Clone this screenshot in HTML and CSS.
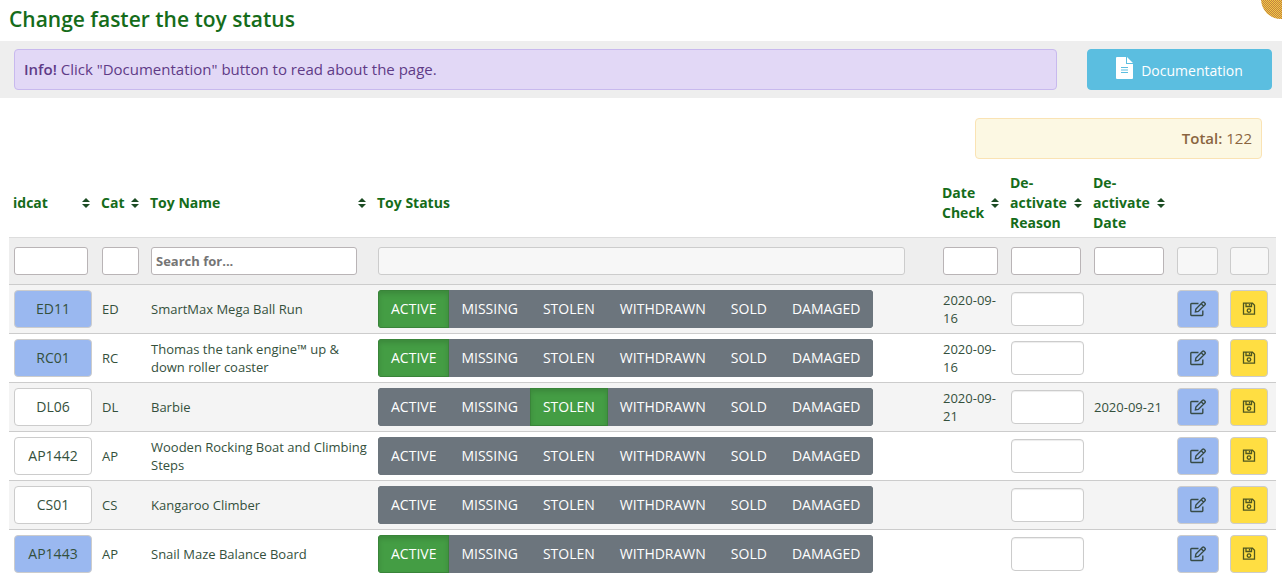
FILE: index.html
```html
<!DOCTYPE html>
<html lang="en">
<head>
<meta charset="utf-8">
<title>Change faster the toy status</title>
<link rel="stylesheet" href="styles.css">
</head>
<body>
<svg class="sprite" aria-hidden="true">
  <symbol id="i-edit" viewBox="0 0 16 16"><path d="M8.5 2.500H1.500a.7.700 0 0 0-.7.700v10.600c0 .4.300.7.700.7h10.600a.7.700 0 0 0 .7-.7V9.500M5.400 10.800l.5-2.800L12.600 1.300a1 1 0 0 1 1.400 0l1 1a1 1 0 0 1 0 1.400L8.300 10.400zM11.200 2.800l2.300 2.300"/></symbol>
  <symbol id="i-save" viewBox="0 0 14 14"><path d="M1.500 1.200h9l2 2v9h-11zM4 1.200v3.300h5.500V1.200M7.500 2v1.500"/><circle cx="7" cy="8.600" r="1.800"/></symbol>
  <symbol id="i-sort" viewBox="0 0 8 10"><path d="M4 0l4 4H0zM4 10l4-4H0z"/></symbol>
</svg>
<header class="top">
  <h1 class="title">Change faster the toy status</h1>
  <span class="bubble"></span>
</header>
<section class="infobar">
  <p class="info"><strong>Info!</strong> Click "Documentation" button to read about the page.</p>
  <button class="doc" type="button"><svg class="doc-icon" viewBox="0 0 17 22" aria-hidden="true"><path d="M1 0h9v7h7v14a1 1 0 0 1-1 1H1a1 1 0 0 1-1-1V1a1 1 0 0 1 1-1zM11 0l6 6h-6z" fill="#fff"/><path d="M5 10.500h7M5 13h7M5 15.500h7" stroke="#5bbee0"/></svg>Documentation</button>
</section>
<main class="content">
  <p class="total"><strong>Total:</strong> 122</p>
  <table class="toys">
    <colgroup><col class="c-id"><col class="c-cat"><col class="c-name"><col><col class="c-check"><col class="c-de"><col class="c-de"><col class="c-edit"><col class="c-save"></colgroup>
    <thead>
      <tr>
        <th scope="col"><div class="head"><span>idcat</span><svg class="sort"><use href="#i-sort"/></svg></div></th>
        <th scope="col"><div class="head"><span>Cat</span><svg class="sort"><use href="#i-sort"/></svg></div></th>
        <th scope="col"><div class="head"><span>Toy Name</span><svg class="sort"><use href="#i-sort"/></svg></div></th>
        <th scope="col">Toy Status</th>
        <th scope="col"><div class="head"><span>Date Check</span><svg class="sort"><use href="#i-sort"/></svg></div></th>
        <th scope="col"><div class="head"><span>De-activate Reason</span><svg class="sort"><use href="#i-sort"/></svg></div></th>
        <th scope="col"><div class="head"><span>De-activate Date</span><svg class="sort"><use href="#i-sort"/></svg></div></th>
        <td></td><td></td>
      </tr>
      <tr class="filters">
        <td><input class="filter" aria-label="Filter idcat"></td>
        <td class="tight"><input class="filter" aria-label="Filter category"></td>
        <td class="name-gap"><input class="filter" aria-label="Filter toy name" placeholder="Search for..."></td>
        <td class="wide-gap"><input class="filter" aria-label="Filter status" disabled></td>
        <td class="mid"><input class="filter" aria-label="Filter date check"></td>
        <td class="mid"><input class="filter" aria-label="Filter reason"></td>
        <td class="mid"><input class="filter" aria-label="Filter de-activate date"></td>
        <td class="tight"><input class="filter" aria-label="Filter edit" disabled></td>
        <td class="tight"><input class="filter" aria-label="Filter save" disabled></td>
      </tr>
    </thead>
    <tbody>
      <tr>
        <td><button class="btn id blue" type="button">ED11</button></td><td>ED</td><td>SmartMax Mega Ball Run</td>
        <td><div class="group"><button class="st on" type="button">ACTIVE</button><button class="st" type="button">MISSING</button><button class="st" type="button">STOLEN</button><button class="st" type="button">WITHDRAWN</button><button class="st" type="button">SOLD</button><button class="st" type="button">DAMAGED</button></div></td>
        <td>2020-09-16</td><td><input class="reason" aria-label="Reason ED11"></td><td></td>
        <td><button class="btn blue edit" type="button" aria-label="Edit"><svg class="ic-edit"><use href="#i-edit"/></svg></button></td>
        <td><button class="btn save" type="button" aria-label="Save"><svg class="ic-save"><use href="#i-save"/></svg></button></td>
      </tr>
      <tr>
        <td><button class="btn id blue" type="button">RC01</button></td><td>RC</td><td>Thomas the tank engine™ up &amp; down roller coaster</td>
        <td><div class="group"><button class="st on" type="button">ACTIVE</button><button class="st" type="button">MISSING</button><button class="st" type="button">STOLEN</button><button class="st" type="button">WITHDRAWN</button><button class="st" type="button">SOLD</button><button class="st" type="button">DAMAGED</button></div></td>
        <td>2020-09-16</td><td><input class="reason" aria-label="Reason RC01"></td><td></td>
        <td><button class="btn blue edit" type="button" aria-label="Edit"><svg class="ic-edit"><use href="#i-edit"/></svg></button></td>
        <td><button class="btn save" type="button" aria-label="Save"><svg class="ic-save"><use href="#i-save"/></svg></button></td>
      </tr>
      <tr>
        <td><button class="btn id" type="button">DL06</button></td><td>DL</td><td>Barbie</td>
        <td><div class="group"><button class="st" type="button">ACTIVE</button><button class="st" type="button">MISSING</button><button class="st on" type="button">STOLEN</button><button class="st" type="button">WITHDRAWN</button><button class="st" type="button">SOLD</button><button class="st" type="button">DAMAGED</button></div></td>
        <td>2020-09-21</td><td><input class="reason" aria-label="Reason DL06"></td><td>2020-09-21</td>
        <td><button class="btn blue edit" type="button" aria-label="Edit"><svg class="ic-edit"><use href="#i-edit"/></svg></button></td>
        <td><button class="btn save" type="button" aria-label="Save"><svg class="ic-save"><use href="#i-save"/></svg></button></td>
      </tr>
      <tr>
        <td><button class="btn id" type="button">AP1442</button></td><td>AP</td><td>Wooden Rocking Boat and Climbing Steps</td>
        <td><div class="group"><button class="st" type="button">ACTIVE</button><button class="st" type="button">MISSING</button><button class="st" type="button">STOLEN</button><button class="st" type="button">WITHDRAWN</button><button class="st" type="button">SOLD</button><button class="st" type="button">DAMAGED</button></div></td>
        <td></td><td><input class="reason" aria-label="Reason AP1442"></td><td></td>
        <td><button class="btn blue edit" type="button" aria-label="Edit"><svg class="ic-edit"><use href="#i-edit"/></svg></button></td>
        <td><button class="btn save" type="button" aria-label="Save"><svg class="ic-save"><use href="#i-save"/></svg></button></td>
      </tr>
      <tr>
        <td><button class="btn id" type="button">CS01</button></td><td>CS</td><td>Kangaroo Climber</td>
        <td><div class="group"><button class="st" type="button">ACTIVE</button><button class="st" type="button">MISSING</button><button class="st" type="button">STOLEN</button><button class="st" type="button">WITHDRAWN</button><button class="st" type="button">SOLD</button><button class="st" type="button">DAMAGED</button></div></td>
        <td></td><td><input class="reason" aria-label="Reason CS01"></td><td></td>
        <td><button class="btn blue edit" type="button" aria-label="Edit"><svg class="ic-edit"><use href="#i-edit"/></svg></button></td>
        <td><button class="btn save" type="button" aria-label="Save"><svg class="ic-save"><use href="#i-save"/></svg></button></td>
      </tr>
      <tr>
        <td><button class="btn id blue" type="button">AP1443</button></td><td>AP</td><td>Snail Maze Balance Board</td>
        <td><div class="group"><button class="st on" type="button">ACTIVE</button><button class="st" type="button">MISSING</button><button class="st" type="button">STOLEN</button><button class="st" type="button">WITHDRAWN</button><button class="st" type="button">SOLD</button><button class="st" type="button">DAMAGED</button></div></td>
        <td></td><td><input class="reason" aria-label="Reason AP1443"></td><td></td>
        <td><button class="btn blue edit" type="button" aria-label="Edit"><svg class="ic-edit"><use href="#i-edit"/></svg></button></td>
        <td><button class="btn save" type="button" aria-label="Save"><svg class="ic-save"><use href="#i-save"/></svg></button></td>
      </tr>
    </tbody>
  </table>
</main>
</body>
</html>
```

FILE: styles.css
```css
* { box-sizing: border-box; }
body { margin: 0; background: #fff; color: #34503c; font-family: "Open Sans", "Noto Sans", sans-serif; font-size: 13px; line-height: 18px; }
button, input { font-family: inherit; }
.sprite { position: absolute; width: 0; height: 0; }
.top { position: relative; overflow: hidden; padding: 4px 9px 7px; }
.title { margin: 0; color: #156c1a; font-size: 21px; line-height: 30px; font-weight: 600; }
.bubble { position: absolute; top: -21px; right: -19px; width: 40px; height: 40px; border-radius: 50%; background: repeating-conic-gradient(#c28242 0 25%, #f2c844 0 50%) 0 0 / 2px 2px; }

.infobar { display: flex; gap: 30px; padding: 8px 10px 8px 14px; background: #eee; }
.info { flex: 1; margin: 0; padding: 9px; border: 1px solid #c8b9ee; border-radius: 4px; background: #e2d8f6; color: #5f3b87; font-size: 15px; line-height: 21px; }
.info strong, .total strong { font-weight: 600; }
.doc { display: flex; justify-content: center; align-items: center; gap: 8px; width: 185px; padding: 2px 0 0; border: 1px solid #5bbee0; border-radius: 4px; background: #5bbee0; color: #fff; font-size: 14px; line-height: 21px; }
.doc-icon { width: 17px; height: 22px; margin-bottom: 6px; }

.content { padding: 20px 6px 0 9px; }
.total { width: 287px; margin: 0 14px 9px auto; padding: 9px; border: 1px solid #fae3b4; border-radius: 4px; background: #fcf8e3; color: #8a6540; font-size: 15px; line-height: 21px; text-align: right; }

.toys { width: 100%; table-layout: fixed; border-collapse: separate; border-spacing: 0; }
.c-id { width: 88px; }
.c-cat { width: 49px; }
.c-name { width: 227px; }
.c-check { width: 68px; }
.c-de { width: 83px; }
.c-edit { width: 53px; }
.c-save { width: 51px; }
.toys th { padding: 5px 7px 4px 4px; color: #156c1a; font-size: 14px; line-height: 20px; font-weight: 700; text-align: left; }
.head { display: flex; align-items: center; justify-content: space-between; }
.sort { flex: none; width: 8px; height: 10px; fill: #1d4d24; }
.filters td { padding: 9px 9px 9px 5px; border-top: 1px solid #ddd; border-bottom: 1px solid #ccc; background: #eee; }
.filters .wide-gap { padding-right: 33px; }
.filters .name-gap { padding-right: 16px; }
.filters .mid { padding-right: 8px; }
.filters .tight { padding-right: 7px; }
.filter { display: block; width: 100%; height: 28px; padding: 0 4px; border: 1px solid #b9b4b6; border-radius: 3px; background: #fff; font-size: 13px; font-weight: 700; }
.filter::placeholder { color: #757575; opacity: 1; }
.filter:disabled { border-color: #ccc; background: #f7f7f7; }
tbody td { height: 49px; padding: 5px; border-bottom: 1px solid #ccc; vertical-align: middle; }
tbody tr:nth-child(odd) td { background: #f4f4f4; }
tbody tr:last-child td { height: 48px; border-bottom: 0; }
.btn { display: flex; align-items: center; justify-content: center; width: 100%; height: 38px; padding: 0; border: 1px solid #ccc; border-radius: 4px; background: #fff; color: #34503c; font-size: 14px; line-height: 20px; }
.blue { background: #9ab8f0; }
.save { width: 38px; background: #ffde42; }
.edit { width: 42px; }
.ic-edit { width: 16px; height: 16px; fill: none; stroke: #374b46; stroke-width: 1.4; }
.ic-save { width: 14px; height: 14px; fill: none; stroke: #4f5720; stroke-width: 1.3; }
.group { display: inline-flex; vertical-align: top; overflow: hidden; border-radius: 4px; background: #6c757d; }
.st { height: 38px; padding: 0 12px; border: 1px solid #6c757d; background: #6c757d; color: #fff; font-size: 14px; line-height: 20px; }
.st + .st { margin-left: -1px; }
.st.on { z-index: 1; border-color: #398439; background: #449d44; box-shadow: inset 0 3px 5px rgba(0, 0, 0, .125); }
.reason { display: block; width: 100%; height: 34px; padding: 0 6px; border: 1px solid #ccc; border-radius: 4px; background: #fff; box-shadow: inset 0 1px 1px rgba(0, 0, 0, .075); font-size: 14px; }
```
